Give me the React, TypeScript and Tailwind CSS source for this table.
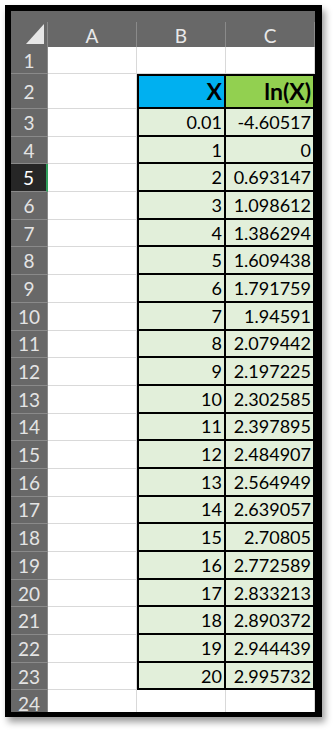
const rows: [string, string][] = [
  ['0.01', '-4.60517'],
  ['1', '0'],
  ['2', '0.693147'],
  ['3', '1.098612'],
  ['4', '1.386294'],
  ['5', '1.609438'],
  ['6', '1.791759'],
  ['7', '1.94591'],
  ['8', '2.079442'],
  ['9', '2.197225'],
  ['10', '2.302585'],
  ['11', '2.397895'],
  ['12', '2.484907'],
  ['13', '2.564949'],
  ['14', '2.639057'],
  ['15', '2.70805'],
  ['16', '2.772589'],
  ['17', '2.833213'],
  ['18', '2.890372'],
  ['19', '2.944439'],
  ['20', '2.995732'],
];

function RowHeader({ n, active }: { n: number; active?: boolean }) {
  return (
    <div
      className={`flex items-center justify-center border-b border-[#8a8a8a] text-[19px] ${
        active ? 'border-r-2 border-r-[#2f9e5b] bg-[#262626] text-white' : 'border-r border-r-[#8a8a8a] bg-[#686868] text-[#e4e4e4]'
      }`}
    >
      {n}
    </div>
  );
}

function Blank() {
  return <div className="border-b border-r border-[#d9d9d9] bg-white" />;
}

export default function App() {
  return (
    <div className="min-h-[731px] bg-white pl-[5px] pt-[5px]">
      <div className="h-[712px] w-[317px] bg-black pb-[5px] pl-[6px] pr-[7px] pt-[6px] shadow-[3px_5px_7px_rgba(0,0,0,0.4)]">
        <div className="h-full overflow-hidden bg-white font-['Lato',sans-serif] text-[18px] leading-none text-black">
          {/* column headers */}
          <div className="grid h-[36px] grid-cols-[37px_89px_89px_89px] bg-[#686868] text-[19px] text-[#e8e8e8]">
            <div className="mt-[11px] flex items-end justify-end border-r border-[#8a8a8a] pb-[3px] pr-[3px]">
              <svg width="18" height="20" viewBox="0 0 18 20">
                <polygon points="18,0 18,20 0,20" fill="#e6e6e6" />
              </svg>
            </div>
            {['A', 'B', 'C'].map((c) => (
              <div key={c} className="mt-[11px] flex items-center justify-center border-r border-[#8a8a8a] pt-[2px]">
                {c}
              </div>
            ))}
          </div>

          {/* row 1 */}
          <div className="grid h-[27px] grid-cols-[37px_89px_89px_89px]">
            <RowHeader n={1} />
            <Blank />
            <Blank />
            <Blank />
          </div>

          {/* row 2 */}
          <div className="grid h-[35px] grid-cols-[37px_89px_89px_89px]">
            <RowHeader n={2} />
            <Blank />
            <div className="flex items-center justify-end border-2 border-black bg-[#00b0f0] pr-[2px] text-[23px] font-bold">X</div>
            <div className="flex items-center justify-end border-y-2 border-r-2 border-black bg-[#92d050] pr-[2px] text-[23px] font-bold">
              ln(X)
            </div>
          </div>

          {rows.map(([x, y], i) => (
            <div key={x} className="grid h-[27.7px] grid-cols-[37px_89px_89px_89px]">
              <RowHeader n={i + 3} active={i + 3 === 5} />
              <Blank />
              <div className="flex items-center justify-end border-x-2 border-b-2 border-black bg-[#e2efda] pr-[2px]">{x}</div>
              <div className="flex items-center justify-end border-b-2 border-r-2 border-black bg-[#e2efda] pr-[2px]">{y}</div>
            </div>
          ))}

          {/* row 24 */}
          <div className="grid h-[28px] grid-cols-[37px_89px_89px_89px]">
            <RowHeader n={24} />
            <Blank />
            <Blank />
            <Blank />
          </div>
        </div>
      </div>
    </div>
  );
}
